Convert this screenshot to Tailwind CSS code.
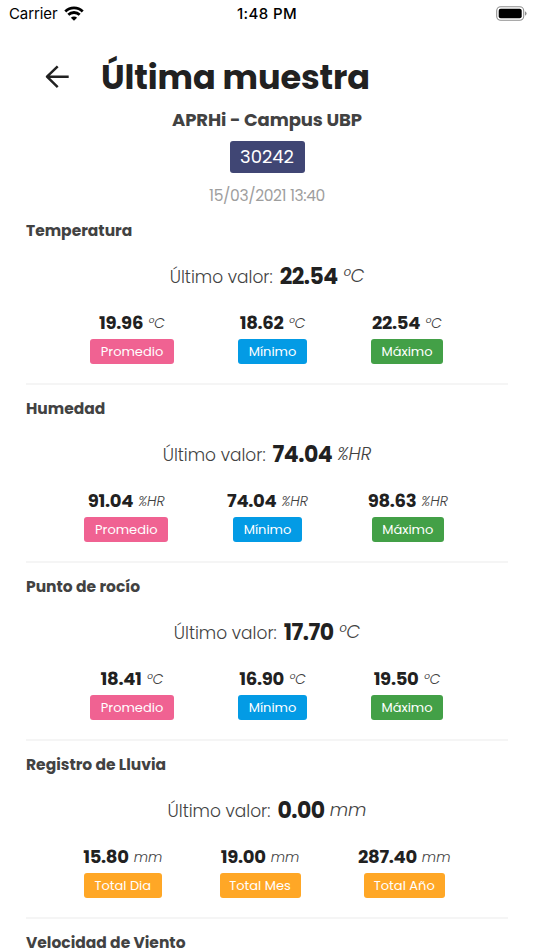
<!DOCTYPE html>
<html lang="es">

<head>
    <meta charset="utf-8">
    <title>Última muestra</title>
    <script src="https://cdn.jsdelivr.net/npm/@tailwindcss/browser@4"></script>
</head>

<body class="bg-white">
    <div class="w-[534px] h-[950px] overflow-hidden whitespace-nowrap font-['Poppins','Inter',sans-serif] text-[#424242]">

        <!-- status bar -->
        <div class="grid grid-cols-3 items-center h-[28px] pl-[9px] pr-[7px] text-black text-[15px] font-['Inter',sans-serif]">
            <div class="flex items-center gap-[7px]">
                <span class="tracking-[-0.1px]">Carrier</span>
                <svg class="w-[20px] h-[15px] -mt-[2px]" viewBox="0 0 20 15" fill="none" stroke="#000" stroke-width="2.8">
                    <path d="M1.3 5.4a12.4 12.4 0 0 1 17.4 0" />
                    <path d="M4.3 8.800a8.2 8.2 0 0 1 11.4 0" />
                    <path d="M10 14.800l-3.1-3.1a4.4 4.4 0 0 1 6.2 0z" fill="#000" stroke="none" />
                </svg>
            </div>
            <span class="-ml-[2px] text-center font-medium tracking-[0.400px]">1:48 PM</span>
            <svg class="w-[31px] h-[15px] justify-self-end -mt-[2px]" viewBox="0 0 31 15">
                <rect x="0.7" y="0.7" width="27" height="13.6" rx="4" fill="none" stroke="#8f8f8f" stroke-width="1.1" />
                <rect x="2.7" y="2.7" width="23" height="9.6" rx="2" fill="#000" />
                <path d="M29 5.3q1.6.7 1.6 2.2T29 9.700z" fill="#8f8f8f" />
            </svg>
        </div>

        <!-- title -->
        <div class="flex items-center h-[78px] pt-[20px] pl-[45px]">
            <svg class="w-[24px] h-[24px]" viewBox="0 0 24 24" fill="none" stroke="#212121" stroke-width="2.5" stroke-linejoin="round">
                <path d="M23.700 11.700H2M12.700 1.400L2 11.700l10.700 10.400" />
            </svg>
            <h1 class="ml-[32px] mt-[2px] text-[33.500px] leading-none font-bold tracking-[-0.1px] text-[#212121]">Última muestra</h1>
        </div>

        <div class="flex flex-col items-center h-[101px]">
            <h2 class="h-[28px] leading-[28px] text-[18px] font-bold tracking-[-0.100px]">APRHi - Campus UBP</h2>
            <span class="mt-[7px] w-[75px] h-[32px] leading-[32px] rounded-[3px] bg-[#404674] text-center text-[18px] text-white">30242</span>
            <span class="mt-[10px] leading-[25px] text-[15.500px] tracking-[-0.380px] text-[#9e9e9e]">15/03/2021 13:40</span>
        </div>

        <!-- one section per sensor -->
        <section class="mx-[26px] h-[178px] border-b-2 border-[#f5f5f5]">
            <h3 class="h-[48px] leading-[48px] text-[15.500px] font-bold">Temperatura</h3>
            <p class="flex justify-center items-center h-[42px] mb-[9px] text-[17px] font-light"><span class="mt-[3px]">Último valor:</span><b class="ml-[7px] text-[22px] font-bold tracking-[-0.500px] text-[#212121]">22.54</b><i class="ml-[5px] -mt-[1px] text-[18px]">ºC</i></p>
            <div class="flex justify-evenly pr-[1px] text-[13px] text-white">
                <div class="flex flex-col items-center w-[84px]">
                    <p class="flex items-center h-[33px] text-[#424242]"><b class="text-[18px] tracking-[-0.300px] text-[#212121]">19.96</b><i class="ml-[5px] mt-[1px] text-[14px] font-light">ºC</i></p>
                    <span class="w-[84px] h-[25px] leading-[25px] rounded-[3px] bg-[#f06292] text-center">Promedio</span>
                </div>
                <div class="flex flex-col items-center w-[69px]">
                    <p class="flex items-center h-[33px] text-[#424242]"><b class="text-[18px] tracking-[-0.300px] text-[#212121]">18.62</b><i class="ml-[5px] mt-[1px] text-[14px] font-light">ºC</i></p>
                    <span class="w-[69px] h-[25px] leading-[25px] rounded-[3px] bg-[#039be5] text-center">Mínimo</span>
                </div>
                <div class="flex flex-col items-center w-[72px]">
                    <p class="flex items-center h-[33px] text-[#424242]"><b class="text-[18px] tracking-[-0.300px] text-[#212121]">22.54</b><i class="ml-[5px] mt-[1px] text-[14px] font-light">ºC</i></p>
                    <span class="w-[72px] h-[25px] leading-[25px] rounded-[3px] bg-[#43a047] text-center">Máximo</span>
                </div>
            </div>
        </section>

        <section class="mx-[26px] h-[178px] border-b-2 border-[#f5f5f5]">
            <h3 class="h-[48px] leading-[48px] text-[15.500px] font-bold">Humedad</h3>
            <p class="flex justify-center items-center h-[42px] mb-[9px] text-[17px] font-light"><span class="mt-[3px]">Último valor:</span><b class="ml-[7px] text-[22px] font-bold tracking-[-0.500px] text-[#212121]">74.04</b><i class="ml-[5px] -mt-[1px] text-[18px]">%HR</i></p>
            <div class="flex justify-evenly pr-[1px] text-[13px] text-white">
                <div class="flex flex-col items-center w-[84px]">
                    <p class="flex items-center h-[33px] text-[#424242]"><b class="text-[18px] tracking-[-0.300px] text-[#212121]">91.04</b><i class="ml-[5px] mt-[1px] text-[14px] font-light">%HR</i></p>
                    <span class="w-[84px] h-[25px] leading-[25px] rounded-[3px] bg-[#f06292] text-center">Promedio</span>
                </div>
                <div class="flex flex-col items-center w-[82px]">
                    <p class="flex items-center h-[33px] text-[#424242]"><b class="text-[18px] tracking-[-0.300px] text-[#212121]">74.04</b><i class="ml-[5px] mt-[1px] text-[14px] font-light">%HR</i></p>
                    <span class="w-[69px] h-[25px] leading-[25px] rounded-[3px] bg-[#039be5] text-center">Mínimo</span>
                </div>
                <div class="flex flex-col items-center w-[82px]">
                    <p class="flex items-center h-[33px] text-[#424242]"><b class="text-[18px] tracking-[-0.300px] text-[#212121]">98.63</b><i class="ml-[5px] mt-[1px] text-[14px] font-light">%HR</i></p>
                    <span class="w-[72px] h-[25px] leading-[25px] rounded-[3px] bg-[#43a047] text-center">Máximo</span>
                </div>
            </div>
        </section>

        <section class="mx-[26px] h-[178px] border-b-2 border-[#f5f5f5]">
            <h3 class="h-[48px] leading-[48px] text-[15.500px] font-bold">Punto de rocío</h3>
            <p class="flex justify-center items-center h-[42px] mb-[9px] text-[17px] font-light"><span class="mt-[3px]">Último valor:</span><b class="ml-[7px] text-[22px] font-bold tracking-[-0.500px] text-[#212121]">17.70</b><i class="ml-[5px] -mt-[1px] text-[18px]">ºC</i></p>
            <div class="flex justify-evenly pr-[1px] text-[13px] text-white">
                <div class="flex flex-col items-center w-[84px]">
                    <p class="flex items-center h-[33px] text-[#424242]"><b class="text-[18px] tracking-[-0.300px] text-[#212121]">18.41</b><i class="ml-[5px] mt-[1px] text-[14px] font-light">ºC</i></p>
                    <span class="w-[84px] h-[25px] leading-[25px] rounded-[3px] bg-[#f06292] text-center">Promedio</span>
                </div>
                <div class="flex flex-col items-center w-[69px]">
                    <p class="flex items-center h-[33px] text-[#424242]"><b class="text-[18px] tracking-[-0.300px] text-[#212121]">16.90</b><i class="ml-[5px] mt-[1px] text-[14px] font-light">ºC</i></p>
                    <span class="w-[69px] h-[25px] leading-[25px] rounded-[3px] bg-[#039be5] text-center">Mínimo</span>
                </div>
                <div class="flex flex-col items-center w-[72px]">
                    <p class="flex items-center h-[33px] text-[#424242]"><b class="text-[18px] tracking-[-0.300px] text-[#212121]">19.50</b><i class="ml-[5px] mt-[1px] text-[14px] font-light">ºC</i></p>
                    <span class="w-[72px] h-[25px] leading-[25px] rounded-[3px] bg-[#43a047] text-center">Máximo</span>
                </div>
            </div>
        </section>

        <section class="mx-[26px] h-[178px] border-b-2 border-[#f5f5f5]">
            <h3 class="h-[48px] leading-[48px] text-[15.500px] font-bold">Registro de Lluvia</h3>
            <p class="flex justify-center items-center h-[42px] mb-[9px] text-[17px] font-light"><span class="mt-[3px]">Último valor:</span><b class="ml-[7px] text-[22px] font-bold tracking-[-0.500px] text-[#212121]">0.00</b><i class="ml-[5px] -mt-[1px] text-[18px]">mm</i></p>
            <div class="flex justify-evenly text-[13px] text-white">
                <div class="flex flex-col items-center w-[78px]">
                    <p class="flex items-center h-[33px] text-[#424242]"><b class="text-[18px] tracking-[-0.300px] text-[#212121]">15.80</b><i class="ml-[5px] mt-[1px] text-[14px] font-light">mm</i></p>
                    <span class="w-[78px] h-[25px] leading-[25px] rounded-[3px] bg-[#ffa726] text-center">Total Dia</span>
                </div>
                <div class="flex flex-col items-center w-[81px]">
                    <p class="flex items-center h-[33px] text-[#424242]"><b class="text-[18px] tracking-[-0.300px] text-[#212121]">19.00</b><i class="ml-[5px] mt-[1px] text-[14px] font-light">mm</i></p>
                    <span class="w-[81px] h-[25px] leading-[25px] rounded-[3px] bg-[#ffa726] text-center">Total Mes</span>
                </div>
                <div class="flex flex-col items-center w-[92px]">
                    <p class="flex items-center h-[33px] text-[#424242]"><b class="text-[18px] tracking-[-0.300px] text-[#212121]">287.40</b><i class="ml-[5px] mt-[1px] text-[14px] font-light">mm</i></p>
                    <span class="w-[81px] h-[25px] leading-[25px] rounded-[3px] bg-[#ffa726] text-center">Total Año</span>
                </div>
            </div>
        </section>

        <section class="mx-[26px]">
            <h3 class="h-[31px] leading-[48px] text-[15.500px] font-bold">Velocidad de Viento</h3>
        </section>
    </div>
</body>

</html>
